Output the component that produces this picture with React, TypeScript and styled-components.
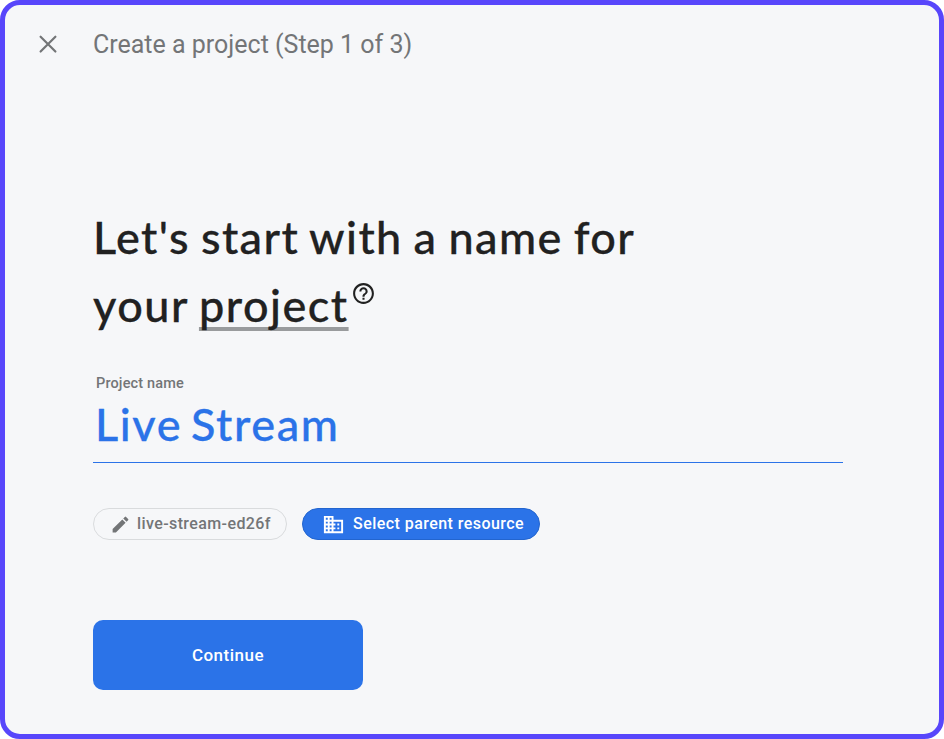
import React, { useState } from 'react'
import styled, { createGlobalStyle } from 'styled-components'
import { MdBusiness, MdEdit, MdHelpOutline } from 'react-icons/md'

const GlobalStyle = createGlobalStyle`
    * {
        box-sizing: border-box;
    }

    body {
        margin: 0;
        background-color: #ffffff;
        font-family: Roboto, sans-serif;
    }
`;

const Dialog = styled.div`
    height: 739px;
    border: 5px solid #5846fb;
    border-radius: 20px;
    background-color: #f6f7f9;
    overflow: hidden;
`;

const Header = styled.header`
    display: flex;
    align-items: center;
    height: 78px;
    padding-left: 33px;
`;

const CloseButton = styled.button`
    display: flex;
    width: 55px;
    padding: 0;
    border: none;
    background: none;
    color: #737577;
`;

const StepTitle = styled.div`
    padding-top: 2px;
    font-size: 25px;
    line-height: 32px;
    color: #737577;
`;

const Content = styled.main`
    display: flex;
    flex-direction: column;
    align-items: flex-start;
    padding: 120px 96px 0 88px;
`;

const Headline = styled.h1`
    display: flex;
    flex-direction: column;
    margin: 0;
    font-family: Lato, sans-serif;
    font-size: 45px;
    font-weight: 500;
    line-height: 68px;
    color: #212121;
    -webkit-text-stroke: 0.3px currentColor;
    white-space: nowrap;
`;

const HeadlineRow = styled.span<{ $spacing: string }>`
    display: flex;
    letter-spacing: ${({ $spacing }) => $spacing};
    word-spacing: -1.8px;
`;

const Term = styled.span`
    margin-left: 10px;
    text-decoration: underline;
    text-decoration-color: #999b9d;
    text-decoration-thickness: 4px;
    text-decoration-skip-ink: none;
    text-underline-offset: 5px;
`;

const HelpIcon = styled(MdHelpOutline)`
    margin: 10px 0 0 2px;
    font-size: 25px;
`;

const Field = styled.div`
    display: flex;
    flex-direction: column;
    width: 750px;
    height: 92px;
    margin-top: 32px;
    border-bottom: 1px solid #2b73e8;
`;

const Label = styled.label`
    padding-left: 3px;
    font-size: 14.5px;
    font-weight: 500;
    line-height: 26px;
    letter-spacing: 0.15px;
    color: #737577;
`;

const NameInput = styled.input`
    width: 100%;
    height: 54px;
    padding: 0 0 0 2px;
    border: none;
    outline: none;
    background: none;
    font-family: Lato, sans-serif;
    font-size: 45px;
    font-weight: 500;
    letter-spacing: 1.6px;
    word-spacing: -4px;
    color: #2b73e8;
    -webkit-text-stroke: 0.3px currentColor;
`;

const Chips = styled.div`
    display: flex;
    gap: 15px;
    margin-top: 45px;
`;

const Chip = styled.button<{ $primary?: boolean }>`
    display: flex;
    align-items: center;
    gap: ${({ $primary }) => ($primary ? '8px' : '6px')};
    width: ${({ $primary }) => ($primary ? '238px' : '194px')};
    height: 32px;
    padding: 0 0 0 ${({ $primary }) => ($primary ? '19px' : '16px')};
    border: 1px solid ${({ $primary }) => ($primary ? '#2365cf' : '#d9dbdd')};
    border-radius: 16px;
    background-color: ${({ $primary }) => ($primary ? '#2b73e8' : 'transparent')};
    color: ${({ $primary }) => ($primary ? '#ffffff' : '#737577')};
    font-family: Roboto, sans-serif;
    font-size: 16px;
    font-weight: 500;
    letter-spacing: ${({ $primary }) => ($primary ? '0.45px' : '0.4px')};
    white-space: nowrap;

    svg {
        flex: none;
    }
`;

const ChipText = styled.span`
    padding-bottom: 2px;
`;

const ContinueButton = styled.button`
    width: 270px;
    height: 70px;
    margin-top: 80px;
    border: none;
    border-radius: 10px;
    background-color: #2b73e8;
    color: #ffffff;
    font-family: Roboto, sans-serif;
    font-size: 17px;
    font-weight: 500;
    letter-spacing: 0.5px;
`;

const CloseIcon = () => (
    <svg width="20" height="20" viewBox="0 0 20 20" fill="none" stroke="currentColor" strokeWidth="2.2" strokeLinecap="round">
        <path d="M2.6 2.7 17.4 17.5M17.4 2.7 2.6 17.5" />
    </svg>
)

export default function CreateProject() {
    const [projectName, setProjectName] = useState('Live Stream');

    return (
        <>
            <GlobalStyle />
            <Dialog>
                <Header>
                    <CloseButton aria-label="Close">
                        <CloseIcon />
                    </CloseButton>
                    <StepTitle>Create a project (Step 1 of 3)</StepTitle>
                </Header>

                <Content>
                    <Headline>
                        <HeadlineRow $spacing="1.4px">Let's start with a name for</HeadlineRow>
                        <HeadlineRow $spacing="1.5px">
                            your <Term>project</Term>
                            <HelpIcon />
                        </HeadlineRow>
                    </Headline>

                    <Field>
                        <Label htmlFor="project-name">Project name</Label>
                        <NameInput
                            id="project-name"
                            value={projectName}
                            spellCheck={false}
                            onChange={(e) => setProjectName(e.target.value)}
                        />
                    </Field>

                    <Chips>
                        <Chip>
                            <MdEdit size={21} />
                            <ChipText>live-stream-ed26f</ChipText>
                        </Chip>
                        <Chip $primary>
                            <MdBusiness size={23} />
                            <ChipText>Select parent resource</ChipText>
                        </Chip>
                    </Chips>

                    <ContinueButton>Continue</ContinueButton>
                </Content>
            </Dialog>
        </>
    )
}
